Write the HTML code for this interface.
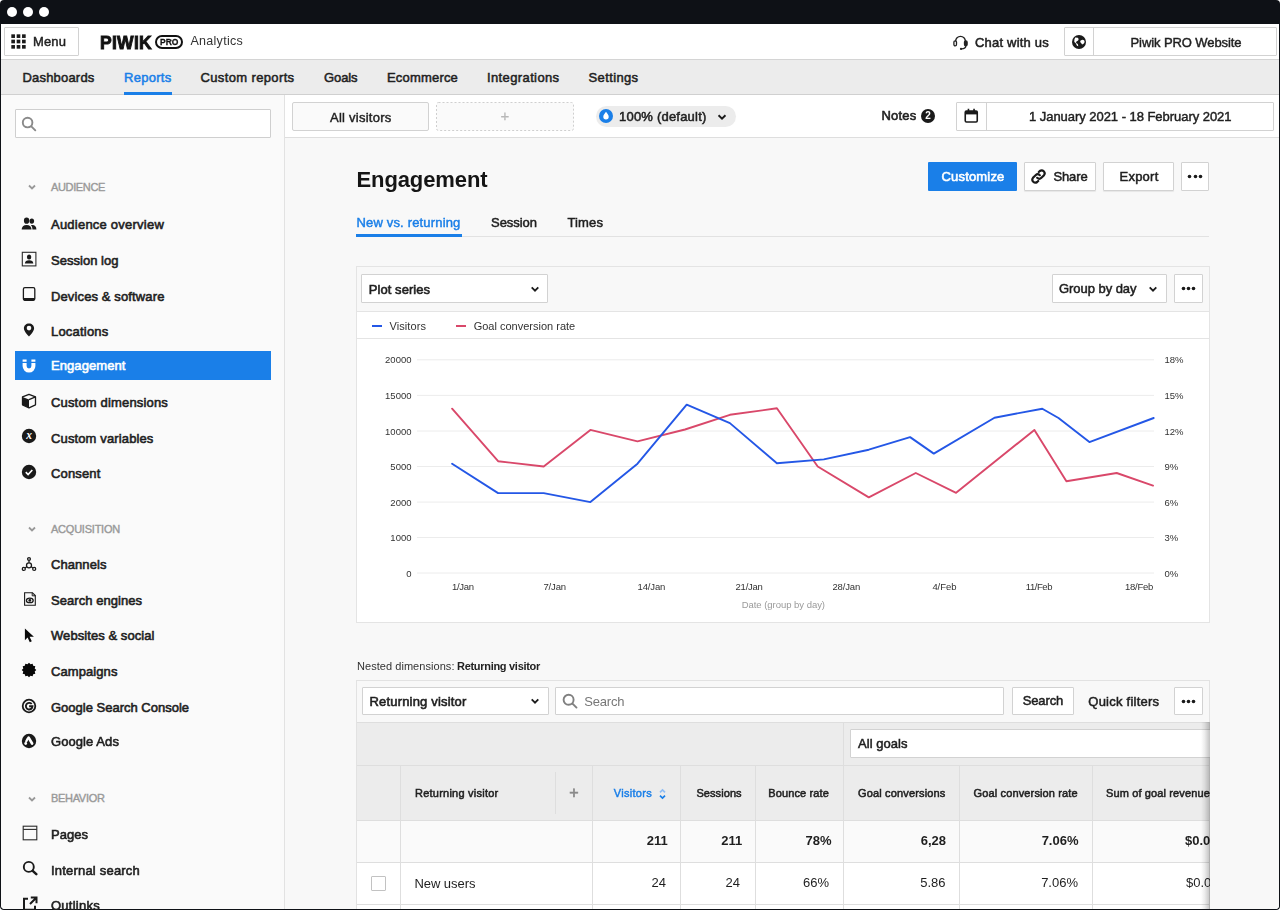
<!DOCTYPE html>
<html lang="en"><head><meta charset="utf-8"><title>Piwik PRO Analytics - Engagement</title>
<style>
html,body{margin:0;padding:0;}
body{width:1280px;height:910px;overflow:hidden;position:relative;background:#fff;font-family:"Liberation Sans",sans-serif;}
#app{position:absolute;left:0;top:0;width:1280px;height:910px;overflow:hidden;}
#ui{position:absolute;left:0;top:0;width:1280px;height:910px;filter:blur(0.35px);}
#app header,#app nav,#app aside,#app main,#app section{position:absolute;left:0;top:0;width:1280px;height:910px;display:block;}
#app div,#app svg{position:absolute;box-sizing:border-box;}
.t{position:absolute;white-space:nowrap;}
</style></head><body><div id="app">
<section class="window-frame">
<div style="left:0px;top:0px;width:1280px;height:910px;background:#0e1116;border-radius:4px;"></div>
<div style="left:1px;top:24px;width:1278px;height:885px;background:#ffffff;border-radius:0 0 4px 4px;"></div>
<div style="left:7px;top:7px;width:10px;height:10px;background:#ffffff;border-radius:5px;"></div>
<div style="left:23px;top:7px;width:10px;height:10px;background:#ffffff;border-radius:5px;"></div>
<div style="left:39px;top:7px;width:10px;height:10px;background:#ffffff;border-radius:5px;"></div>
</section>
<div id="ui">
<header class="topbar">
<div style="left:1px;top:59px;width:1278px;height:1px;background:#d4d4d4;"></div>
<div style="left:4px;top:27px;width:75px;height:29px;background:#fff;border:1px solid #d2d2d2;border-radius:1px;"></div>
<svg style="left:11px;top:34px" width="15" height="15" viewBox="0 0 14 14"><rect x="0.3" y="0.3" width="3.4" height="3.4" fill="#1a1a1a"/><rect x="0.3" y="5.3" width="3.4" height="3.4" fill="#1a1a1a"/><rect x="0.3" y="10.3" width="3.4" height="3.4" fill="#1a1a1a"/><rect x="5.3" y="0.3" width="3.4" height="3.4" fill="#1a1a1a"/><rect x="5.3" y="5.3" width="3.4" height="3.4" fill="#1a1a1a"/><rect x="5.3" y="10.3" width="3.4" height="3.4" fill="#1a1a1a"/><rect x="10.3" y="0.3" width="3.4" height="3.4" fill="#1a1a1a"/><rect x="10.3" y="5.3" width="3.4" height="3.4" fill="#1a1a1a"/><rect x="10.3" y="10.3" width="3.4" height="3.4" fill="#1a1a1a"/></svg>
<div style="left:155px;top:34.5px;width:28px;height:14px;border:2px solid #111;border-radius:7px;"></div>
<svg style="left:952px;top:34px" width="17" height="17" viewBox="0 0 17 17" fill="none" stroke="#222" stroke-width="1.3"><path d="M3.6 7.2a4.9 4.9 0 0 1 9.800 0"/><rect x="1.900" y="6.800" width="2.600" height="5" rx="1.300"/><rect x="12.500" y="6.800" width="2.600" height="5" rx="1.300" fill="#222"/><path d="M13.800 11.800c0 2.300-1.900 3.100-4.300 3.100" stroke-linecap="round"/><circle cx="9" cy="14.900" r="1.100" fill="#222" stroke="none"/></svg>
<div style="left:1064px;top:27px;width:213px;height:29px;background:#fff;border:1px solid #d2d2d2;border-radius:1px;"></div>
<div style="left:1093px;top:27px;width:1px;height:29px;background:#d2d2d2;"></div>
<svg style="left:1072px;top:34.800px" width="14" height="14" viewBox="0 0 14 14"><circle cx="7" cy="7" r="7" fill="#1a1a1a"/><path d="M3.200 2.400l2.600.3.900 1.300-.6 1.500-1.700.9-.4 1.600 1.800 1 .5 2.200-1.300-.5-1.400-2.600-1.300-1.200.1-2.400zM8.600 5.400l1.800-.7 1.700.6.600 1.600-1.100 1.900-1.500.6-1-1.300-1-1.200z" fill="#fff"/></svg>
<span class="t" style="font-size:13px;line-height:18px;top:33.00px;color:#1f1f1f;-webkit-text-stroke:0.45px #1f1f1f;letter-spacing:0.117px;left:33px;">Menu</span>
<span class="t" style="font-size:17.5px;line-height:24px;top:30.80px;color:#111;font-weight:700;-webkit-text-stroke:0.91px #111;letter-spacing:0.287px;left:100px;">PIWIK</span>
<span class="t" style="font-size:8.5px;line-height:12px;top:35.50px;color:#111;font-weight:700;-webkit-text-stroke:0.26px #111;letter-spacing:0.026px;left:169.2px;transform:translateX(-50%);">PRO</span>
<span class="t" style="font-size:12.5px;line-height:18px;top:31.80px;color:#333;letter-spacing:0.274px;left:190.5px;">Analytics</span>
<span class="t" style="font-size:13px;line-height:18px;top:33.50px;color:#1f1f1f;-webkit-text-stroke:0.52px #1f1f1f;letter-spacing:0.204px;left:975px;">Chat with us</span>
<span class="t" style="font-size:13px;line-height:18px;top:33.50px;color:#1f1f1f;-webkit-text-stroke:0.45px #1f1f1f;letter-spacing:-0.086px;left:1130.5px;">Piwik PRO Website</span>
</header>
<nav class="main-nav">
<div style="left:1px;top:60px;width:1278px;height:34px;background:#ececec;"></div>
<div style="left:1px;top:94px;width:1278px;height:1px;background:#d0d0d0;"></div>
<div style="left:124px;top:92px;width:48px;height:3px;background:#1a7fe8;"></div>
<span class="t" style="font-size:13px;line-height:18px;top:69.00px;color:#1f1f1f;-webkit-text-stroke:0.52px #1f1f1f;letter-spacing:0.189px;left:22.5px;">Dashboards</span>
<span class="t" style="font-size:13px;line-height:18px;top:69.00px;color:#1a7fe8;-webkit-text-stroke:0.52px #1a7fe8;letter-spacing:0.281px;left:124px;">Reports</span>
<span class="t" style="font-size:13px;line-height:18px;top:69.00px;color:#1f1f1f;-webkit-text-stroke:0.52px #1f1f1f;letter-spacing:0.366px;left:200.5px;">Custom reports</span>
<span class="t" style="font-size:13px;line-height:18px;top:69.00px;color:#1f1f1f;-webkit-text-stroke:0.52px #1f1f1f;letter-spacing:-0.094px;left:324px;">Goals</span>
<span class="t" style="font-size:13px;line-height:18px;top:69.00px;color:#1f1f1f;-webkit-text-stroke:0.52px #1f1f1f;letter-spacing:0.182px;left:387px;">Ecommerce</span>
<span class="t" style="font-size:13px;line-height:18px;top:69.00px;color:#1f1f1f;-webkit-text-stroke:0.52px #1f1f1f;letter-spacing:0.380px;left:487px;">Integrations</span>
<span class="t" style="font-size:13px;line-height:18px;top:69.00px;color:#1f1f1f;-webkit-text-stroke:0.52px #1f1f1f;letter-spacing:0.377px;left:588.5px;">Settings</span>
</nav>
<aside class="sidebar">
<div style="left:1px;top:95px;width:283px;height:814px;background:#fafafa;border-radius:0 0 0 4px;"></div>
<div style="left:284px;top:95px;width:1px;height:814px;background:#e2e2e2;"></div>
<div style="left:15px;top:109px;width:256px;height:29px;background:#fff;border:1px solid #cfcfcf;border-radius:1px;"></div>
<svg style="left:21px;top:116px" width="16" height="16" viewBox="0 0 16 16" fill="none" stroke="#8a8a8a" stroke-width="1.9" stroke-linecap="round"><circle cx="6.6" cy="6.6" r="4.8"/><path d="M10.3 10.3l4 4"/></svg>
<svg style="left:27.299999999999997px;top:182.2px" width="10" height="10" viewBox="0 0 10 10" fill="none" stroke="#999" stroke-width="1.8"><path d="M2.0 3.5L5 6.5L8.0 3.5"/></svg>
<svg style="left:27.299999999999997px;top:524.2px" width="10" height="10" viewBox="0 0 10 10" fill="none" stroke="#999" stroke-width="1.8"><path d="M2.0 3.5L5 6.5L8.0 3.5"/></svg>
<svg style="left:27.299999999999997px;top:793.5px" width="10" height="10" viewBox="0 0 10 10" fill="none" stroke="#999" stroke-width="1.8"><path d="M2.0 3.5L5 6.5L8.0 3.5"/></svg>
<div style="left:15px;top:351px;width:256px;height:29px;background:#1a7fe8;"></div>
<svg style="left:20.2px;top:214.7px" width="18" height="18" viewBox="0 0 18 18" fill="#1a1a1a"><ellipse cx="6.6" cy="5.7" rx="2.7" ry="3.1"/><path d="M1.7 14.6c0-2.900 1.700-4.600 4.900-4.600s4.900 1.700 4.900 4.600z"/><ellipse cx="11.800" cy="6.100" rx="2.300" ry="2.700"/><path d="M12.400 9.900c2.500 0 4 1.500 4 4.700h-4c0-1.900-.5-3.300-1.500-4.300.4-.3.900-.4 1.500-.4z"/></svg>
<svg style="left:20.2px;top:249.5px" width="18" height="18" viewBox="0 0 18 18" fill="#1a1a1a"><rect x="2.300" y="2.300" width="13.600" height="13.600" fill="none" stroke="#2a2a2a" stroke-width="1.100"/><ellipse cx="9.100" cy="6.900" rx="2.200" ry="2.500"/><path d="M4.900 13.400c.2-2.200 1.600-3.200 4.200-3.200s4 1 4.200 3.200z"/></svg>
<svg style="left:20.2px;top:285.3px" width="18" height="18" viewBox="0 0 18 18" fill="#1a1a1a"><rect x="3.400" y="2.700" width="11.400" height="12.600" rx="1.500" fill="none" stroke="#1a1a1a" stroke-width="1.300"/><path d="M3.400 12.900h11.400v1.200a1.500 1.500 0 0 1-1.500 1.500h-8.400a1.500 1.500 0 0 1-1.500-1.500z"/></svg>
<svg style="left:20.2px;top:321.0px" width="18" height="18" viewBox="0 0 18 18" fill="#1a1a1a"><path d="M9 2.500c-2.900 0-5.100 2.100-5.100 4.800 0 3.100 3.600 6.600 5.100 8.300 1.500-1.700 5.100-5.200 5.100-8.300 0-2.700-2.200-4.800-5.100-4.800z"/><circle cx="9" cy="7.100" r="2.300" fill="#fafafa"/></svg>
<svg style="left:20.2px;top:356.8px" width="18" height="18" viewBox="0 0 18 18" fill="#ffffff"><path d="M2.600 2.500h4v2.300h-4zM11.400 2.500h4v2.300h-4zM2.600 5.900h4v3.200a2.400 2.400 0 0 0 4.800 0v-3.200h4v3.200a6.400 6.400 0 0 1-12.800 0z"/></svg>
<svg style="left:20.2px;top:391.6px" width="18" height="18" viewBox="0 0 18 18" fill="#1a1a1a"><path d="M9 2.300l6.500 2.600v7.900l-6.500 3-6.500-3v-7.900z" fill="#fafafa" stroke="#1a1a1a" stroke-width="1.300" stroke-linejoin="round"/><path d="M2.500 4.900l6.500 2.700v8.200l-6.500-3z"/><path d="M9 7.600l6.500-2.700" stroke="#1a1a1a" stroke-width="1.300" fill="none"/></svg>
<svg style="left:20.2px;top:427.4px" width="18" height="18" viewBox="0 0 18 18" fill="#1a1a1a"><circle cx="9" cy="9" r="7.200"/><text x="9.100" y="12.300" text-anchor="middle" font-family="Liberation Serif, serif" font-style="italic" font-weight="700" font-size="11.500" fill="#fff">x</text></svg>
<svg style="left:20.2px;top:463.1px" width="18" height="18" viewBox="0 0 18 18" fill="#1a1a1a"><circle cx="9" cy="9" r="7.200"/><path d="M5.800 9.200l2.300 2.300 4.200-4.500" stroke="#fff" stroke-width="1.700" fill="none"/></svg>
<svg style="left:20.2px;top:554.5px" width="18" height="18" viewBox="0 0 18 18" fill="#1a1a1a"><g fill="none" stroke="#1a1a1a" stroke-width="1.300"><circle cx="9" cy="4" r="1.400"/><circle cx="3.800" cy="13.900" r="1.500"/><circle cx="14.200" cy="13.900" r="1.500"/><circle cx="9" cy="10.300" r="2.500"/><path d="M9 5.400v2.400M6.800 11.700l-1.800 1.300M11.200 11.700l1.800 1.300"/></g></svg>
<svg style="left:21.099999999999998px;top:590.1px" width="18" height="18" viewBox="0 0 18 18" fill="#1a1a1a"><path d="M3.600 2.700h7.800l2.900 2.900v9.700h-10.700z" fill="none" stroke="#1a1a1a" stroke-width="1.100"/><path d="M11.200 2.700v3.100h3.100" fill="none" stroke="#1a1a1a" stroke-width="1"/><ellipse cx="8.800" cy="10.400" rx="3.400" ry="2.300" fill="none" stroke="#1a1a1a" stroke-width="1.300"/><circle cx="8.800" cy="10.400" r="1.400"/></svg>
<svg style="left:20.2px;top:625.6px" width="18" height="18" viewBox="0 0 18 18" fill="#0a0a0a"><path d="M4.900 2.400l9 8.300h-4.300l2.200 4.600-2 .9-2.200-4.700-2.700 2.700z"/></svg>
<svg style="left:20.4px;top:661.1px" width="18" height="18" viewBox="0 0 18 18" fill="#080808"><polygon points="9.00,1.70 10.53,3.30 12.65,2.68 13.17,4.83 15.32,5.35 14.70,7.47 16.30,9.00 14.70,10.53 15.32,12.65 13.17,13.17 12.65,15.32 10.53,14.70 9.00,16.30 7.47,14.70 5.35,15.32 4.83,13.17 2.68,12.65 3.30,10.53 1.70,9.00 3.30,7.47 2.68,5.35 4.83,4.83 5.35,2.68 7.47,3.30"/></svg>
<svg style="left:20.2px;top:696.6px" width="18" height="18" viewBox="0 0 18 18" fill="#1a1a1a"><circle cx="9" cy="9" r="6.300" fill="none" stroke="#1a1a1a" stroke-width="1.800"/><path d="M11.700 7a3.300 3.300 0 1 0 .8 2.300h-3.400" fill="none" stroke="#1a1a1a" stroke-width="1.900"/></svg>
<svg style="left:20.2px;top:732.2px" width="18" height="18" viewBox="0 0 18 18" fill="#1a1a1a"><circle cx="9" cy="9" r="7.200"/><path d="M8.600 5.600l3.500 5.900" stroke="#fff" stroke-width="2.700" stroke-linecap="round" fill="none"/><path d="M7.600 6.800l-1.300 2.400" stroke="#fff" stroke-width="2.300" stroke-linecap="round" fill="none"/><circle cx="5.700" cy="11.500" r="1.400" fill="#fff"/></svg>
<svg style="left:21.3px;top:823.5px" width="18" height="18" viewBox="0 0 18 18" fill="#1a1a1a"><rect x="2.200" y="2.200" width="13.600" height="13.600" fill="none" stroke="#2a2a2a" stroke-width="1.100"/><path d="M2.200 5.400h13.600" stroke="#2a2a2a" stroke-width="1.100"/></svg>
<svg style="left:20.2px;top:859.0px" width="18" height="18" viewBox="0 0 18 18" fill="#1a1a1a"><circle cx="8.800" cy="7.900" r="5" fill="none" stroke="#1a1a1a" stroke-width="1.900"/><path d="M12.700 11.800l3.600 3.300" stroke="#1a1a1a" stroke-width="2.500" stroke-linecap="round"/></svg>
<svg style="left:21.0px;top:895.2px" width="18" height="18" viewBox="0 0 18 18" fill="#1a1a1a"><path d="M7 3.700h-4v11h11v-4" fill="none" stroke="#1a1a1a" stroke-width="2"/><path d="M9.800 2.500h5.700v5.700M15 3l-6 6" fill="none" stroke="#1a1a1a" stroke-width="2"/></svg>
<span class="t" style="font-size:11px;line-height:15px;top:179.80px;color:#999;-webkit-text-stroke:0.39px #999;letter-spacing:-0.355px;left:51px;">AUDIENCE</span>
<span class="t" style="font-size:11px;line-height:15px;top:521.80px;color:#999;-webkit-text-stroke:0.39px #999;letter-spacing:-0.229px;left:51px;">ACQUISITION</span>
<span class="t" style="font-size:11px;line-height:15px;top:791.10px;color:#999;-webkit-text-stroke:0.39px #999;letter-spacing:-0.316px;left:51px;">BEHAVIOR</span>
<span class="t" style="font-size:13px;line-height:18px;top:216.00px;color:#1f1f1f;-webkit-text-stroke:0.59px #1f1f1f;letter-spacing:0.228px;left:51px;">Audience overview</span>
<span class="t" style="font-size:13px;line-height:18px;top:251.80px;color:#1f1f1f;-webkit-text-stroke:0.59px #1f1f1f;letter-spacing:0.026px;left:51px;">Session log</span>
<span class="t" style="font-size:13px;line-height:18px;top:287.50px;color:#1f1f1f;-webkit-text-stroke:0.59px #1f1f1f;letter-spacing:0.124px;left:51px;">Devices &amp; software</span>
<span class="t" style="font-size:13px;line-height:18px;top:322.80px;color:#1f1f1f;-webkit-text-stroke:0.59px #1f1f1f;letter-spacing:0.205px;left:51px;">Locations</span>
<span class="t" style="font-size:13px;line-height:18px;top:356.90px;color:#fff;-webkit-text-stroke:0.59px #fff;letter-spacing:0.077px;left:51px;">Engagement</span>
<span class="t" style="font-size:13px;line-height:18px;top:394.10px;color:#1f1f1f;-webkit-text-stroke:0.59px #1f1f1f;letter-spacing:0.167px;left:51px;">Custom dimensions</span>
<span class="t" style="font-size:13px;line-height:18px;top:429.50px;color:#1f1f1f;-webkit-text-stroke:0.59px #1f1f1f;letter-spacing:0.129px;left:51px;">Custom variables</span>
<span class="t" style="font-size:13px;line-height:18px;top:465.30px;color:#1f1f1f;-webkit-text-stroke:0.59px #1f1f1f;letter-spacing:0.154px;left:51px;">Consent</span>
<span class="t" style="font-size:13px;line-height:18px;top:556.10px;color:#1f1f1f;-webkit-text-stroke:0.59px #1f1f1f;letter-spacing:0.070px;left:51px;">Channels</span>
<span class="t" style="font-size:13px;line-height:18px;top:591.90px;color:#1f1f1f;-webkit-text-stroke:0.59px #1f1f1f;letter-spacing:0.047px;left:51px;">Search engines</span>
<span class="t" style="font-size:13px;line-height:18px;top:627.30px;color:#1f1f1f;-webkit-text-stroke:0.59px #1f1f1f;letter-spacing:0.067px;left:51px;">Websites &amp; social</span>
<span class="t" style="font-size:13px;line-height:18px;top:663.20px;color:#1f1f1f;-webkit-text-stroke:0.59px #1f1f1f;letter-spacing:0.082px;left:51px;">Campaigns</span>
<span class="t" style="font-size:13px;line-height:18px;top:698.80px;color:#1f1f1f;-webkit-text-stroke:0.59px #1f1f1f;left:51px;">Google Search Console</span>
<span class="t" style="font-size:13px;line-height:18px;top:733.00px;color:#1f1f1f;-webkit-text-stroke:0.59px #1f1f1f;letter-spacing:0.078px;left:51px;">Google Ads</span>
<span class="t" style="font-size:13px;line-height:18px;top:825.90px;color:#1f1f1f;-webkit-text-stroke:0.59px #1f1f1f;letter-spacing:0.025px;left:51px;">Pages</span>
<span class="t" style="font-size:13px;line-height:18px;top:861.50px;color:#1f1f1f;-webkit-text-stroke:0.59px #1f1f1f;letter-spacing:0.200px;left:51px;">Internal search</span>
<span class="t" style="font-size:13px;line-height:18px;top:897.10px;color:#1f1f1f;-webkit-text-stroke:0.59px #1f1f1f;letter-spacing:0.254px;left:51px;">Outlinks</span>
</aside>
<section class="segment-toolbar">
<div style="left:285px;top:95px;width:994px;height:42px;background:#fff;"></div>
<div style="left:285px;top:137px;width:994px;height:1px;background:#dedede;"></div>
<div style="left:285px;top:138px;width:994px;height:771px;background:#f8f8f8;border-radius:0 0 4px 0;"></div>
<div style="left:292px;top:102px;width:137px;height:29px;background:#fafafa;border:1px solid #d2d2d2;border-radius:2px;"></div>
<svg style="left:436px;top:102px" width="138" height="29" viewBox="0 0 138 29"><rect x="0.5" y="0.5" width="137" height="28" rx="2" fill="#fafafa" stroke="#cfcfcf" stroke-dasharray="2 2"/></svg>
<div style="left:596px;top:106px;width:140px;height:21px;background:#ececec;border-radius:11px;"></div>
<svg style="left:599px;top:109px" width="14" height="14" viewBox="0 0 14 14"><circle cx="7" cy="7" r="7" fill="#1a7fe8"/><path d="M7 2.8c1.6 2 2.7 3.4 2.7 4.9a2.7 2.7 0 0 1-5.4 0c0-1.5 1.1-2.9 2.7-4.9z" fill="#fff"/></svg>
<svg style="left:717.2px;top:111.8px" width="10" height="10" viewBox="0 0 10 10" fill="none" stroke="#1a1a1a" stroke-width="1.9"><path d="M1.5500000000000003 3.2750000000000004L5 6.725L8.45 3.2750000000000004"/></svg>
<div style="left:921px;top:108.5px;width:14px;height:14px;background:#1a1a1a;border-radius:7px;"></div>
<div style="left:956px;top:102px;width:318px;height:29px;background:#fff;border:1px solid #d2d2d2;border-radius:1px;"></div>
<div style="left:986px;top:102px;width:1px;height:29px;background:#d2d2d2;"></div>
<svg style="left:964.300px;top:108.400px" width="14.500" height="15" viewBox="0 0 14 15" fill="none" stroke="#1a1a1a"><rect x="1" y="3" width="12" height="11" rx="1.2" stroke-width="1.6"/><rect x="1" y="3" width="12" height="3.4" fill="#1a1a1a" stroke="none"/><path d="M4.2 0.8v3M9.8 0.8v3" stroke-width="1.6"/></svg>
<span class="t" style="font-size:13px;line-height:18px;top:108.50px;color:#1f1f1f;-webkit-text-stroke:0.45px #1f1f1f;letter-spacing:0.249px;left:330px;">All visitors</span>
<span class="t" style="font-size:15px;line-height:21px;top:105.30px;color:#b8b8b8;-webkit-text-stroke:0.26px #b8b8b8;left:505px;transform:translateX(-50%);">+</span>
<span class="t" style="font-size:13px;line-height:18px;top:108.00px;color:#1f1f1f;-webkit-text-stroke:0.52px #1f1f1f;letter-spacing:0.210px;left:619px;">100% (default)</span>
<span class="t" style="font-size:13px;line-height:18px;top:106.50px;color:#1f1f1f;-webkit-text-stroke:0.59px #1f1f1f;letter-spacing:0.206px;left:881.5px;">Notes</span>
<span class="t" style="font-size:10px;line-height:14px;top:108.80px;color:#fff;font-weight:700;left:928px;transform:translateX(-50%);">2</span>
<span class="t" style="font-size:13px;line-height:18px;top:108.20px;color:#1f1f1f;-webkit-text-stroke:0.45px #1f1f1f;letter-spacing:-0.040px;left:1029px;">1 January 2021 - 18 February 2021</span>
</section>
<main class="report">
<div style="left:928px;top:162px;width:89px;height:29px;background:#1a7fe8;border-radius:1px;"></div>
<div style="left:1024px;top:162px;width:72px;height:29px;background:#fff;border:1px solid #d2d2d2;border-radius:1px;box-shadow:0 1px 1px rgba(0,0,0,0.07);"></div>
<svg style="left:1030px;top:168.400px" width="17" height="17" viewBox="0 0 17 17" fill="none" stroke="#1a1a1a" stroke-width="2.200" stroke-linecap="round"><path d="M7.2 9.8a3 3 0 0 0 4.2 0l2.6-2.6a3 3 0 0 0-4.2-4.2l-1 1"/><path d="M9.8 7.2a3 3 0 0 0-4.2 0L3 9.8a3 3 0 0 0 4.2 4.2l1-1"/></svg>
<div style="left:1103px;top:162px;width:71px;height:29px;background:#fff;border:1px solid #d2d2d2;border-radius:1px;box-shadow:0 1px 1px rgba(0,0,0,0.07);"></div>
<div style="left:1181px;top:162px;width:28px;height:29px;background:#fff;border:1px solid #d2d2d2;border-radius:1px;"></div>
<svg style="left:1187.25px;top:174.0px" width="5" height="5" viewBox="0 0 5 5"><circle cx="2.5" cy="2.5" r="1.800" fill="#1a1a1a"/></svg>
<svg style="left:1192.5px;top:174.0px" width="5" height="5" viewBox="0 0 5 5"><circle cx="2.5" cy="2.5" r="1.800" fill="#1a1a1a"/></svg>
<svg style="left:1197.75px;top:174.0px" width="5" height="5" viewBox="0 0 5 5"><circle cx="2.5" cy="2.5" r="1.800" fill="#1a1a1a"/></svg>
<div style="left:357px;top:236px;width:852px;height:1px;background:#e2e2e2;"></div>
<div style="left:356px;top:234px;width:106px;height:3px;background:#1a7fe8;"></div>
<span class="t" style="font-size:22px;line-height:31px;top:164.00px;color:#151515;font-weight:700;letter-spacing:-0.103px;left:356.5px;">Engagement</span>
<span class="t" style="font-size:13px;line-height:18px;top:168.00px;color:#fff;-webkit-text-stroke:0.59px #fff;letter-spacing:0.175px;left:941.5px;">Customize</span>
<span class="t" style="font-size:13px;line-height:18px;top:168.00px;color:#1f1f1f;-webkit-text-stroke:0.52px #1f1f1f;letter-spacing:-0.141px;left:1053.5px;">Share</span>
<span class="t" style="font-size:13px;line-height:18px;top:168.00px;color:#1f1f1f;-webkit-text-stroke:0.52px #1f1f1f;letter-spacing:0.237px;left:1119.5px;">Export</span>
<span class="t" style="font-size:13px;line-height:18px;top:213.50px;color:#1a7fe8;-webkit-text-stroke:0.45px #1a7fe8;letter-spacing:0.167px;left:356.5px;">New vs. returning</span>
<span class="t" style="font-size:13px;line-height:18px;top:213.50px;color:#1f1f1f;-webkit-text-stroke:0.52px #1f1f1f;letter-spacing:-0.036px;left:491px;">Session</span>
<span class="t" style="font-size:13px;line-height:18px;top:213.50px;color:#1f1f1f;-webkit-text-stroke:0.52px #1f1f1f;letter-spacing:0.119px;left:567.5px;">Times</span>
</main>
<section class="chart-card">
<div style="left:356px;top:266px;width:854px;height:357px;background:#fff;border:1px solid #e4e4e4;"></div>
<div style="left:357px;top:267px;width:852px;height:44px;background:#f8f8f8;"></div>
<div style="left:357px;top:311px;width:852px;height:1px;background:#e4e4e4;"></div>
<div style="left:357px;top:338px;width:852px;height:1px;background:#e4e4e4;"></div>
<div style="left:361px;top:274px;width:187px;height:29px;background:#fff;border:1px solid #d2d2d2;border-radius:1px;"></div>
<svg style="left:529.5px;top:284.3px" width="10" height="10" viewBox="0 0 10 10" fill="none" stroke="#1a1a1a" stroke-width="1.8"><path d="M1.6999999999999997 3.3499999999999996L5 6.65L8.3 3.3499999999999996"/></svg>
<div style="left:1052px;top:274px;width:115px;height:29px;background:#fff;border:1px solid #d2d2d2;border-radius:1px;"></div>
<svg style="left:1148.2px;top:284.3px" width="10" height="10" viewBox="0 0 10 10" fill="none" stroke="#1a1a1a" stroke-width="1.8"><path d="M1.6999999999999997 3.3499999999999996L5 6.65L8.3 3.3499999999999996"/></svg>
<div style="left:1174px;top:274px;width:29px;height:29px;background:#fff;border:1px solid #d2d2d2;border-radius:1px;"></div>
<svg style="left:1180.75px;top:286.0px" width="5" height="5" viewBox="0 0 5 5"><circle cx="2.5" cy="2.5" r="1.800" fill="#1a1a1a"/></svg>
<svg style="left:1186.0px;top:286.0px" width="5" height="5" viewBox="0 0 5 5"><circle cx="2.5" cy="2.5" r="1.800" fill="#1a1a1a"/></svg>
<svg style="left:1191.25px;top:286.0px" width="5" height="5" viewBox="0 0 5 5"><circle cx="2.5" cy="2.5" r="1.800" fill="#1a1a1a"/></svg>
<div style="left:371.5px;top:324.5px;width:10px;height:2px;background:#2457e6;"></div>
<div style="left:456px;top:324.5px;width:10px;height:2px;background:#d9486a;"></div>
<svg style="left:357px;top:339px" width="853" height="284" viewBox="357 339 853 284" fill="none"><path d="M417 359.8H1154" stroke="#ececec" stroke-width="1"/><path d="M417 395.4H1154" stroke="#ececec" stroke-width="1"/><path d="M417 431H1154" stroke="#ececec" stroke-width="1"/><path d="M417 466.5H1154" stroke="#ececec" stroke-width="1"/><path d="M417 502.1H1154" stroke="#ececec" stroke-width="1"/><path d="M417 537.5H1154" stroke="#ececec" stroke-width="1"/><path d="M417 573H1154" stroke="#ececec" stroke-width="1"/><polyline points="452.1,408.7 498.1,461.2 543.7,466.5 590.4,429.9 637.5,441.4 685.0,429.5 729.9,414.8 776.9,408.3 817.7,466.5 868.8,497.4 915.8,473.0 956.1,492.8 1034.4,429.9 1066.4,481.3 1116.7,473.0 1153.0,485.6" stroke="#d9486a" stroke-width="1.9" stroke-linejoin="round" stroke-linecap="round"/><polyline points="452.1,463.7 498.1,493.1 543.7,493.1 590.4,502.1 637.5,463.7 686.7,404.7 729.9,423.1 776.9,463.3 823.8,459.4 868.8,449.7 910.1,437.1 933.8,453.6 994.5,417.7 1042.3,408.7 1058.5,418.0 1089.4,442.1 1153.7,418.0" stroke="#2457e6" stroke-width="1.9" stroke-linejoin="round" stroke-linecap="round"/></svg>
<span class="t" style="font-size:13px;line-height:18px;top:281.20px;color:#1f1f1f;-webkit-text-stroke:0.59px #1f1f1f;letter-spacing:0.072px;left:368.7px;">Plot series</span>
<span class="t" style="font-size:13px;line-height:18px;top:280.20px;color:#1f1f1f;-webkit-text-stroke:0.52px #1f1f1f;letter-spacing:-0.046px;left:1059px;">Group by day</span>
<span class="t" style="font-size:11px;line-height:15px;top:318.50px;color:#333;letter-spacing:0.078px;left:389.5px;">Visitors</span>
<span class="t" style="font-size:11px;line-height:15px;top:318.50px;color:#333;left:473.7px;">Goal conversion rate</span>
<span class="t" style="font-size:9.5px;line-height:13px;top:353.30px;color:#333;right:868.5px;">20000</span>
<span class="t" style="font-size:9.5px;line-height:13px;top:353.30px;color:#333;left:1164.5px;">18%</span>
<span class="t" style="font-size:9.5px;line-height:13px;top:388.90px;color:#333;right:868.5px;">15000</span>
<span class="t" style="font-size:9.5px;line-height:13px;top:388.90px;color:#333;left:1164.5px;">15%</span>
<span class="t" style="font-size:9.5px;line-height:13px;top:424.50px;color:#333;right:868.5px;">10000</span>
<span class="t" style="font-size:9.5px;line-height:13px;top:424.50px;color:#333;left:1164.5px;">12%</span>
<span class="t" style="font-size:9.5px;line-height:13px;top:460.00px;color:#333;right:868.5px;">5000</span>
<span class="t" style="font-size:9.5px;line-height:13px;top:460.00px;color:#333;left:1164.5px;">9%</span>
<span class="t" style="font-size:9.5px;line-height:13px;top:495.60px;color:#333;right:868.5px;">2000</span>
<span class="t" style="font-size:9.5px;line-height:13px;top:495.60px;color:#333;left:1164.5px;">6%</span>
<span class="t" style="font-size:9.5px;line-height:13px;top:531.00px;color:#333;right:868.5px;">1000</span>
<span class="t" style="font-size:9.5px;line-height:13px;top:531.00px;color:#333;left:1164.5px;">3%</span>
<span class="t" style="font-size:9.5px;line-height:13px;top:566.50px;color:#333;right:868.5px;">0</span>
<span class="t" style="font-size:9.5px;line-height:13px;top:566.50px;color:#333;left:1164.5px;">0%</span>
<span class="t" style="font-size:9.5px;line-height:13px;top:580.00px;color:#333;letter-spacing:-0.310px;left:452px;">1/Jan</span>
<span class="t" style="font-size:9.5px;line-height:13px;top:580.00px;color:#333;letter-spacing:-0.130px;left:543.4px;">7/Jan</span>
<span class="t" style="font-size:9.5px;line-height:13px;top:580.00px;color:#333;letter-spacing:-0.139px;left:637.5px;">14/Jan</span>
<span class="t" style="font-size:9.5px;line-height:13px;top:580.00px;color:#333;letter-spacing:-0.255px;left:735.6px;">21/Jan</span>
<span class="t" style="font-size:9.5px;line-height:13px;top:580.00px;color:#333;letter-spacing:-0.172px;left:832.5px;">28/Jan</span>
<span class="t" style="font-size:9.5px;line-height:13px;top:580.00px;color:#333;letter-spacing:-0.059px;left:932.4px;">4/Feb</span>
<span class="t" style="font-size:9.5px;line-height:13px;top:580.00px;color:#333;letter-spacing:-0.446px;left:1025.8px;">11/Feb</span>
<span class="t" style="font-size:9.5px;line-height:13px;top:580.00px;color:#333;letter-spacing:-0.263px;left:1125px;">18/Feb</span>
<span class="t" style="font-size:9.5px;line-height:13px;top:598.20px;color:#9a9a9a;letter-spacing:-0.035px;left:741.7px;">Date (group by day)</span>
</section>
<section class="table-card">
<div style="left:356px;top:680px;width:854px;height:229px;background:#fff;border:1px solid #e2e2e2;border-bottom:none;"></div>
<div style="left:357px;top:681px;width:852px;height:41px;background:#f8f8f8;"></div>
<div style="left:362px;top:687px;width:187px;height:28px;background:#fff;border:1px solid #d2d2d2;border-radius:1px;"></div>
<svg style="left:529.5px;top:696.3px" width="10" height="10" viewBox="0 0 10 10" fill="none" stroke="#1a1a1a" stroke-width="1.8"><path d="M1.6999999999999997 3.3499999999999996L5 6.65L8.3 3.3499999999999996"/></svg>
<div style="left:555px;top:687px;width:449px;height:28px;background:#fff;border:1px solid #d2d2d2;border-radius:1px;"></div>
<svg style="left:562px;top:693px" width="16" height="16" viewBox="0 0 16 16" fill="none" stroke="#808080" stroke-width="1.900" stroke-linecap="round"><circle cx="6.600" cy="6.800" r="5"/><path d="M10.500 10.600l4 4"/></svg>
<div style="left:1012px;top:687px;width:62px;height:28px;background:#fff;border:1px solid #d2d2d2;border-radius:1px;"></div>
<div style="left:1174px;top:687px;width:29px;height:28px;background:#fff;border:1px solid #d2d2d2;border-radius:1px;"></div>
<svg style="left:1180.75px;top:698.5px" width="5" height="5" viewBox="0 0 5 5"><circle cx="2.5" cy="2.5" r="1.800" fill="#1a1a1a"/></svg>
<svg style="left:1186.0px;top:698.5px" width="5" height="5" viewBox="0 0 5 5"><circle cx="2.5" cy="2.5" r="1.800" fill="#1a1a1a"/></svg>
<svg style="left:1191.25px;top:698.5px" width="5" height="5" viewBox="0 0 5 5"><circle cx="2.5" cy="2.5" r="1.800" fill="#1a1a1a"/></svg>
<div style="left:357px;top:722px;width:852px;height:44px;background:#ececec;"></div>
<div style="left:357px;top:766px;width:852px;height:55px;background:#ececec;"></div>
<div style="left:357px;top:821px;width:852px;height:42px;background:#fafafa;"></div>
<div style="left:357px;top:863px;width:852px;height:42px;background:#fff;"></div>
<div style="left:357px;top:905px;width:852px;height:4px;background:#fff;"></div>
<div style="left:357px;top:722px;width:852px;height:1px;background:#dedede;"></div>
<div style="left:357px;top:765px;width:852px;height:1px;background:#dedede;"></div>
<div style="left:357px;top:820px;width:852px;height:1px;background:#dedede;"></div>
<div style="left:357px;top:862px;width:852px;height:1px;background:#dedede;"></div>
<div style="left:357px;top:904px;width:852px;height:1px;background:#dedede;"></div>
<div style="left:850px;top:729px;width:365px;height:29px;background:#fff;border:1px solid #d2d2d2;border-radius:1px;"></div>
<div style="left:843px;top:722px;width:1px;height:187px;background:#dedede;"></div>
<div style="left:400px;top:766px;width:1px;height:143px;background:#dedede;"></div>
<div style="left:592px;top:766px;width:1px;height:143px;background:#dedede;"></div>
<div style="left:680px;top:766px;width:1px;height:143px;background:#dedede;"></div>
<div style="left:755px;top:766px;width:1px;height:143px;background:#dedede;"></div>
<div style="left:959px;top:766px;width:1px;height:143px;background:#dedede;"></div>
<div style="left:1092px;top:766px;width:1px;height:143px;background:#dedede;"></div>
<div style="left:555px;top:772px;width:1px;height:42px;background:#dedede;"></div>
<svg style="left:658px;top:788px" width="9" height="12" viewBox="0 0 9 12" fill="none" stroke-width="1.700"><path d="M2 4.400l2.500-2.400 2.500 2.400" stroke="#8fbdf3"/><path d="M2 7.600l2.500 2.400 2.500-2.400" stroke="#1a7fe8"/></svg>
<div style="left:371px;top:876px;width:15px;height:15px;background:#fff;border:1px solid #c2c2c2;border-radius:1px;"></div>
<span class="t" style="font-size:11px;line-height:15px;top:659.20px;color:#333;letter-spacing:0.049px;left:357px;">Nested dimensions:</span>
<span class="t" style="font-size:11px;line-height:15px;top:659.20px;color:#222;font-weight:700;letter-spacing:-0.295px;left:457px;">Returning visitor</span>
<span class="t" style="font-size:13px;line-height:18px;top:692.50px;color:#1f1f1f;-webkit-text-stroke:0.59px #1f1f1f;letter-spacing:0.180px;left:369.5px;">Returning visitor</span>
<span class="t" style="font-size:13px;line-height:18px;top:692.50px;color:#777;letter-spacing:-0.201px;left:584.3px;">Search</span>
<span class="t" style="font-size:13px;line-height:18px;top:692.00px;color:#1f1f1f;-webkit-text-stroke:0.52px #1f1f1f;letter-spacing:-0.117px;left:1022.7px;">Search</span>
<span class="t" style="font-size:13px;line-height:18px;top:693.00px;color:#1f1f1f;-webkit-text-stroke:0.52px #1f1f1f;letter-spacing:0.238px;left:1088.3px;">Quick filters</span>
<span class="t" style="font-size:13px;line-height:18px;top:735.30px;color:#1f1f1f;-webkit-text-stroke:0.52px #1f1f1f;letter-spacing:0.040px;left:858px;">All goals</span>
<span class="t" style="font-size:16px;line-height:22px;top:781.50px;color:#8a8a8a;-webkit-text-stroke:0.65px #8a8a8a;left:574px;transform:translateX(-50%);">+</span>
<span class="t" style="font-size:11px;line-height:15px;top:786.00px;color:#1f1f1f;-webkit-text-stroke:0.52px #1f1f1f;letter-spacing:0.236px;left:415px;">Returning visitor</span>
<span class="t" style="font-size:11px;line-height:15px;top:786.00px;color:#1a7fe8;-webkit-text-stroke:0.45px #1a7fe8;letter-spacing:0.291px;left:613.8px;">Visitors</span>
<span class="t" style="font-size:11px;line-height:15px;top:786.00px;color:#1f1f1f;-webkit-text-stroke:0.52px #1f1f1f;letter-spacing:0.082px;left:696.4px;">Sessions</span>
<span class="t" style="font-size:11px;line-height:15px;top:786.00px;color:#1f1f1f;-webkit-text-stroke:0.52px #1f1f1f;letter-spacing:0.116px;left:768.3px;">Bounce rate</span>
<span class="t" style="font-size:11px;line-height:15px;top:786.00px;color:#1f1f1f;-webkit-text-stroke:0.52px #1f1f1f;letter-spacing:0.156px;left:858px;">Goal conversions</span>
<span class="t" style="font-size:11px;line-height:15px;top:786.00px;color:#1f1f1f;-webkit-text-stroke:0.52px #1f1f1f;letter-spacing:0.135px;left:973.6px;">Goal conversion rate</span>
<span class="t" style="font-size:11px;line-height:15px;top:786.00px;color:#1f1f1f;-webkit-text-stroke:0.52px #1f1f1f;letter-spacing:0.131px;left:1106px;">Sum of goal revenue</span>
<span class="t" style="font-size:13px;line-height:18px;top:832.00px;color:#1f1f1f;font-weight:700;right:612.3px;">211</span>
<span class="t" style="font-size:13px;line-height:18px;top:832.00px;color:#1f1f1f;font-weight:700;right:537.8px;">211</span>
<span class="t" style="font-size:13px;line-height:18px;top:832.00px;color:#1f1f1f;font-weight:700;right:448.5px;">78%</span>
<span class="t" style="font-size:13px;line-height:18px;top:832.00px;color:#1f1f1f;font-weight:700;right:334px;">6,28</span>
<span class="t" style="font-size:13px;line-height:18px;top:832.00px;color:#1f1f1f;font-weight:700;right:201.5px;">7.06%</span>
<span class="t" style="font-size:13px;line-height:18px;top:832.00px;color:#1f1f1f;font-weight:700;left:1185px;">$0.00</span>
<span class="t" style="font-size:13px;line-height:18px;top:874.50px;color:#1f1f1f;letter-spacing:-0.047px;left:414.4px;">New users</span>
<span class="t" style="font-size:13px;line-height:18px;top:874.00px;color:#1f1f1f;right:614px;">24</span>
<span class="t" style="font-size:13px;line-height:18px;top:874.00px;color:#1f1f1f;right:540px;">24</span>
<span class="t" style="font-size:13px;line-height:18px;top:874.00px;color:#1f1f1f;right:451px;">66%</span>
<span class="t" style="font-size:13px;line-height:18px;top:874.00px;color:#1f1f1f;right:334.5px;">5.86</span>
<span class="t" style="font-size:13px;line-height:18px;top:874.00px;color:#1f1f1f;right:202px;">7.06%</span>
<span class="t" style="font-size:13px;line-height:18px;top:874.00px;color:#1f1f1f;left:1186px;">$0.00</span>
<div style="left:1201px;top:722px;width:9px;height:187px;background:linear-gradient(to right,rgba(0,0,0,0),rgba(0,0,0,0.07) 40%,rgba(0,0,0,0.24));"></div>
<div style="left:1210px;top:640px;width:69px;height:269px;background:#f8f8f8;border-radius:0 0 4px 0;"></div>
</section>
</div></div></body></html>
